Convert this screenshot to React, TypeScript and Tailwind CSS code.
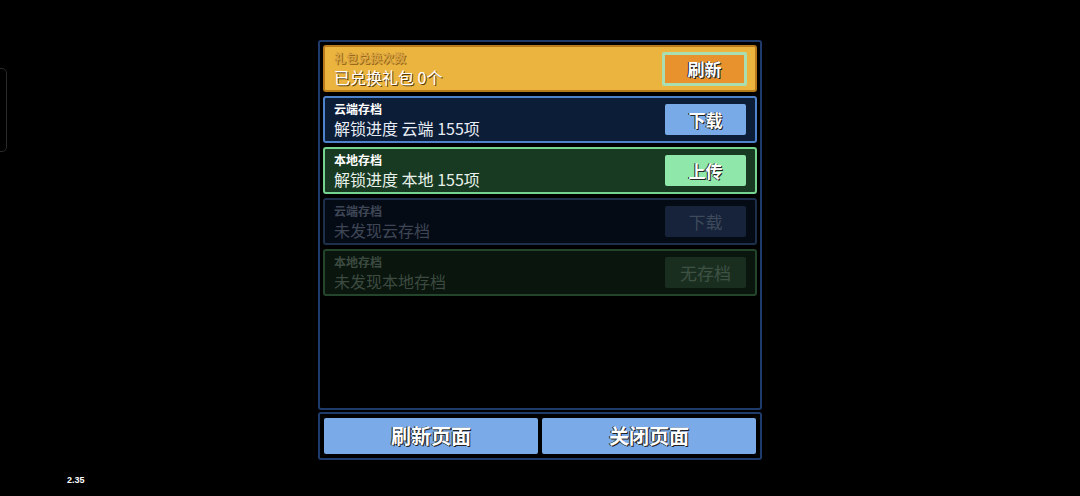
import React from 'react';

type Tone = 'gold' | 'blue' | 'green' | 'blueOff' | 'greenOff';

interface SaveRow {
  tone: Tone;
  title: string;
  detail: string;
  action: string;
}

const rows: SaveRow[] = [
  { tone: 'gold', title: '礼包兑换次数', detail: '已兑换礼包 0个', action: '刷新' },
  { tone: 'blue', title: '云端存档', detail: '解锁进度 云端 155项', action: '下载' },
  { tone: 'green', title: '本地存档', detail: '解锁进度 本地 155项', action: '上传' },
  { tone: 'blueOff', title: '云端存档', detail: '未发现云存档', action: '下载' },
  { tone: 'greenOff', title: '本地存档', detail: '未发现本地存档', action: '无存档' },
];

// per-tone classes: card, title, detail, button
const toneStyles: Record<Tone, { card: string; title: string; detail: string; button: string }> = {
  gold: {
    card: 'bg-[#ebb43e] border-[#b77a1c]',
    title: 'text-[#d9a441] [text-shadow:1px_1px_0_#9a6a1a]',
    detail: 'text-white [text-shadow:1px_1px_0_#5a3c10]',
    button: 'bg-[#e8922e] border-[3px] border-[#a9ddb2] text-white font-bold w-[85px] h-[34px] mr-[8px] [text-shadow:1px_1px_0_#222,-1px_0_0_#222]',
  },
  blue: {
    card: 'bg-[#0c1d38] border-[#4d82cc]',
    title: 'text-white',
    detail: 'text-[#e8edf5]',
    button: 'bg-[#78aae8] text-white font-bold w-[81px] h-[31px] mr-[9px] [text-shadow:1px_1px_0_#222,-1px_0_0_#222]',
  },
  green: {
    card: 'bg-[#183a22] border-[#74d490]',
    title: 'text-white',
    detail: 'text-[#e8f2ea]',
    button: 'bg-[#8fe8aa] text-white font-bold w-[81px] h-[31px] mr-[9px] [text-shadow:1px_1px_0_#222,-1px_0_0_#222]',
  },
  blueOff: {
    card: 'bg-[#050b15] border-[#1d2f4a]',
    title: 'text-[#3e4656]',
    detail: 'text-[#3e4656]',
    button: 'bg-[#16233a] text-[#3e4a5c] w-[81px] h-[31px] mr-[9px]',
  },
  greenOff: {
    card: 'bg-[#09150d] border-[#23452c]',
    title: 'text-[#3c4a40]',
    detail: 'text-[#3c4a40]',
    button: 'bg-[#1a2e20] text-[#3e5244] w-[81px] h-[31px] mr-[9px]',
  },
};

const Row: React.FC<{ row: SaveRow }> = ({ row }) => {
  const s = toneStyles[row.tone];
  return (
    <div className={`h-[47px] flex items-center justify-between border-2 rounded-[3px] ${s.card}`}>
      <div className="pl-[9px] flex flex-col">
        <span className={`text-[12px] leading-[17px] font-bold ${s.title}`}>{row.title}</span>
        <span className={`text-[16px] leading-[23px] ${s.detail}`}>{row.detail}</span>
      </div>
      <button className={`flex items-center justify-center rounded-[2px] text-[17px] ${s.button}`}>
        {row.action}
      </button>
    </div>
  );
};

export default function App() {
  return (
    <div
      className="relative w-[1080px] h-[496px] bg-black overflow-hidden"
      style={{ fontFamily: '"Noto Sans CJK SC", "Noto Sans", sans-serif' }}
    >
      {/* faint side handle on the left edge */}
      <div className="absolute left-[-12px] top-[68px] w-[19px] h-[84px] rounded-[5px] border border-[#2a2a2a]" />

      <div className="absolute left-[67px] top-[474px] text-[9px] text-white font-bold" style={{ fontFamily: '"Liberation Sans", sans-serif' }}>
        2.35
      </div>

      <div className="pt-[40px] pl-[318px] flex flex-col gap-[2px] w-[762px]">
        {/* save list panel */}
        <div className="w-[444px] h-[370px] border-2 border-[#1f3b6c] rounded-[3px] p-[3px] flex flex-col gap-[4px]">
          {rows.map((row, i) => (
            <Row key={i} row={row} />
          ))}
        </div>

        {/* bottom actions */}
        <div className="w-[444px] h-[48px] border-2 border-[#1f3b6c] rounded-[3px] p-[4px] flex gap-[4px]">
          <button className="flex-1 bg-[#7aabe8] rounded-[2px] text-white text-[20px] font-bold [text-shadow:1px_1px_0_#222,-1px_0_0_#222]">
            刷新页面
          </button>
          <button className="flex-1 bg-[#7aabe8] rounded-[2px] text-white text-[20px] font-bold [text-shadow:1px_1px_0_#222,-1px_0_0_#222]">
            关闭页面
          </button>
        </div>
      </div>
    </div>
  );
}
